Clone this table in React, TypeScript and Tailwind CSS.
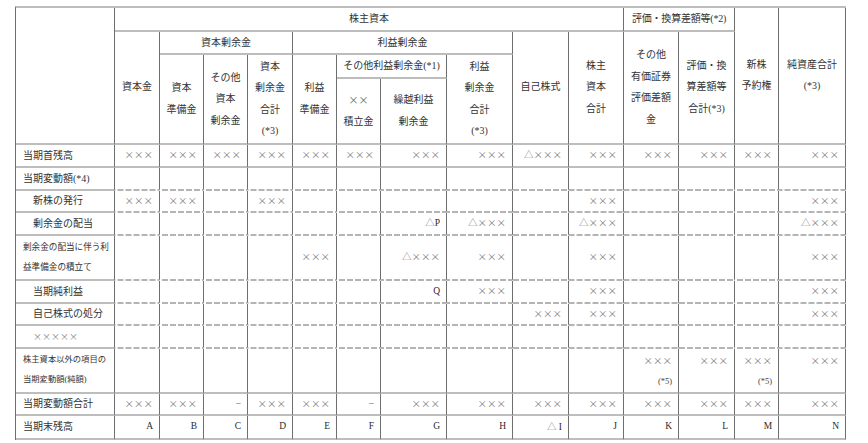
import React from "react";

const R = "border-r border-r-[#6e6e6e]";
const SB = "border-b-2 border-b-[#bdbdbd]";
const DB =
  "border-b-2 border-b-transparent bg-origin-border bg-bottom bg-repeat-x bg-[length:8px_2px] bg-[linear-gradient(90deg,#b4b4b4_6px,transparent_6px)]";
const H = `${R} ${SB} text-center align-middle leading-[21.5px] text-[10px] text-[#333] p-0`;

function Val({ s }: { s: string }) {
  const parts: React.ReactNode[] = [];
  let i = 0;
  for (const ch of s.split("")) {
    if (ch === "×" || ch === "△" || ch === "−") {
      parts.push(
        <span
          key={i++}
          className="font-['Noto_Sans_CJK_JP',sans-serif] text-[#858585] [font-feature-settings:'fwid']"
        >
          {ch}
        </span>
      );
    } else if (ch === " ") {
      parts.push(<span key={i++}>&nbsp;</span>);
    } else {
      parts.push(
        <span key={i++} className="text-[#2a2a2a]">
          {ch}
        </span>
      );
    }
  }
  return <>{parts}</>;
}

type Row = {
  label: React.ReactNode;
  indent?: boolean;
  small?: string;
  h: string;
  dashed: boolean;
  cells: (string | string[] | null)[];
};

const X = "×××";

const rows: Row[] = [
  {
    label: "当期首残高",
    h: "h-[23px]",
    dashed: false,
    cells: [X, X, X, X, X, X, X, X, "△×××", X, X, X, X, X],
  },
  {
    label: "当期変動額(*4)",
    h: "h-[23px]",
    dashed: true,
    cells: [null, null, null, null, null, null, null, null, null, null, null, null, null, null],
  },
  {
    label: "新株の発行",
    indent: true,
    h: "h-[22px]",
    dashed: true,
    cells: [X, X, null, X, null, null, null, null, null, X, null, null, null, X],
  },
  {
    label: "剰余金の配当",
    indent: true,
    h: "h-[23px]",
    dashed: true,
    cells: [null, null, null, null, null, null, "△P", "△×××", null, "△×××", null, null, null, "△×××"],
  },
  {
    label: (
      <>
        剰余金の配当に伴う利
        <br />
        益準備金の積立て
      </>
    ),
    small: "text-[8.6px] leading-[20px]",
    h: "h-[45px]",
    dashed: true,
    cells: [null, null, null, null, X, null, "△×××", X, null, X, null, null, null, X],
  },
  {
    label: "当期純利益",
    indent: true,
    h: "h-[23px]",
    dashed: true,
    cells: [null, null, null, null, null, null, "Q", X, null, X, null, null, null, X],
  },
  {
    label: "自己株式の処分",
    indent: true,
    h: "h-[22px]",
    dashed: true,
    cells: [null, null, null, null, null, null, null, null, X, X, null, null, null, X],
  },
  {
    label: (
      <span className="font-['Noto_Sans_CJK_JP',sans-serif] text-[#858585] [font-feature-settings:'fwid'] text-[9px]">
        ×××××
      </span>
    ),
    indent: true,
    h: "h-[23px]",
    dashed: true,
    cells: [null, null, null, null, null, null, null, null, null, null, null, null, null, null],
  },
  {
    label: (
      <>
        株主資本以外の項目の
        <br />
        当期変動額(純額)
      </>
    ),
    small: "text-[8.3px] leading-[20px]",
    h: "h-[45px]",
    dashed: false,
    cells: [null, null, null, null, null, null, null, null, null, null, [X, "(*5)"], [X, ""], [X, "(*5)"], [X, ""]],
  },
  {
    label: "当期変動額合計",
    h: "h-[22px]",
    dashed: false,
    cells: [X, X, "−", X, X, "−", X, X, X, X, X, X, X, X],
  },
  {
    label: "当期末残高",
    h: "h-[24px]",
    dashed: false,
    cells: ["A", "B", "C", "D", "E", "F", "G", "H", "△ I", "J", "K", "L", "M", "N"],
  },
];

const widths = [
  "w-[99px]",
  "w-[45px]",
  "w-[44px]",
  "w-[44px]",
  "w-[45px]",
  "w-[44px]",
  "w-[44px]",
  "w-[66px]",
  "w-[66px]",
  "w-[56px]",
  "w-[55px]",
  "w-[55px]",
  "w-[56px]",
  "w-[44px]",
  "w-[67px]",
];

export default function App() {
  return (
    <div className="w-[868px] h-[443px] bg-white pt-[6px] pl-[15px] font-['Liberation_Serif','Noto_Sans_CJK_JP',serif] text-[#333]">
      <table className="table-fixed border-separate border-spacing-0 w-[831px] border-l border-l-[#6e6e6e] border-t-2 border-t-[#bdbdbd]">
        <colgroup>
          {widths.map((w, i) => (
            <col key={i} className={w} />
          ))}
        </colgroup>
        <thead>
          <tr className="h-[22px]">
            <th rowSpan={4} className={H}></th>
            <th colSpan={10} className={`${H} font-normal`}>株主資本</th>
            <th colSpan={2} className={`${H} font-normal tracking-[-0.2px]`}>評価・換算差額等(*2)</th>
            <th rowSpan={4} className={`${H} font-normal`}>
              新株
              <br />
              予約権
            </th>
            <th rowSpan={4} className={`${H} font-normal`}>
              純資産合計
              <br />
              (*3)
            </th>
          </tr>
          <tr className="h-[23px]">
            <th rowSpan={3} className={`${H} font-normal`}>資本金</th>
            <th colSpan={3} className={`${H} font-normal`}>資本剰余金</th>
            <th colSpan={4} className={`${H} font-normal`}>利益剰余金</th>
            <th rowSpan={3} className={`${H} font-normal`}>自己株式</th>
            <th rowSpan={3} className={`${H} font-normal`}>
              株主
              <br />
              資本
              <br />
              合計
            </th>
            <th rowSpan={3} className={`${H} font-normal`}>
              その他
              <br />
              有価証券
              <br />
              評価差額
              <br />金
            </th>
            <th rowSpan={3} className={`${H} font-normal`}>
              評価・換
              <br />
              算差額等
              <br />
              合計(*3)
            </th>
          </tr>
          <tr className="h-[23px]">
            <th rowSpan={2} className={`${H} font-normal`}>
              資本
              <br />
              準備金
            </th>
            <th rowSpan={2} className={`${H} font-normal`}>
              その他
              <br />
              資本
              <br />
              剰余金
            </th>
            <th rowSpan={2} className={`${H} font-normal`}>
              資本
              <br />
              剰余金
              <br />
              合計
              <br />
              (*3)
            </th>
            <th rowSpan={2} className={`${H} font-normal`}>
              利益
              <br />
              準備金
            </th>
            <th colSpan={2} className={`${H} font-normal`}>その他利益剰余金(*1)</th>
            <th rowSpan={2} className={`${H} font-normal`}>
              利益
              <br />
              剰余金
              <br />
              合計
              <br />
              (*3)
            </th>
          </tr>
          <tr className="h-[66px]">
            <th className={`${H} font-normal`}>
              <span className="font-['Noto_Sans_CJK_JP',sans-serif] text-[#6a6a6a] [font-feature-settings:'fwid']">××</span>
              <br />
              積立金
            </th>
            <th className={`${H} font-normal`}>
              繰越利益
              <br />
              剰余金
            </th>
          </tr>
        </thead>
        <tbody>
          {rows.map((r, ri) => (
            <tr key={ri} className={r.h}>
              <td
                className={`${R} ${SB} p-0 align-middle text-[#333] whitespace-nowrap ${
                  r.indent ? "pl-[17px]" : "pl-[7px]"
                } ${r.small ? r.small : "text-[10px]"}`}
              >
                {r.label}
              </td>
              {r.cells.map((c, ci) => (
                <td
                  key={ci}
                  className={`${R} ${r.dashed ? DB : SB} p-0 pr-[6px] text-right align-middle text-[9.5px] whitespace-nowrap ${
                    Array.isArray(c) ? "leading-[20px]" : ""
                  }`}
                >
                  {c === null ? null : Array.isArray(c) ? (
                    <>
                      <Val s={c[0]} />
                      <br />
                      {c[1] ? <span className="text-[#444] text-[8.5px]">{c[1]}</span> : <>&nbsp;</>}
                    </>
                  ) : (
                    <Val s={c} />
                  )}
                </td>
              ))}
            </tr>
          ))}
        </tbody>
      </table>
    </div>
  );
}
